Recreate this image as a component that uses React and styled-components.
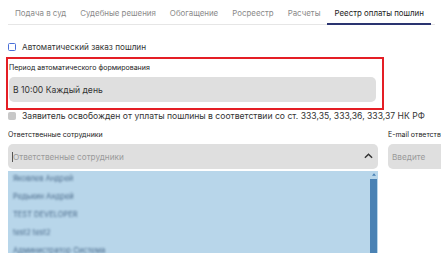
import React from 'react'
import styled, { createGlobalStyle } from 'styled-components'

const GlobalStyle = createGlobalStyle`
    html, body {
        margin: 0;
        padding: 0;
        background: #fff;
        font-family: Inter, "Noto Sans", sans-serif;
        color: #333;
        overflow: hidden;
    }
`;

const tabs = ["Подача в суд", "Судебные решения", "Обогащение", "Росреестр", "Расчеты", "Реестр оплаты пошлин"];
const people = ["Яковлев Андрей", "Редькин Андрей", "TEST DEVELOPER", "test2 test2", "Администратор Система"];

function App() {
    return (
        <>
        <GlobalStyle />
        <Page>
            <Tabs>
                {tabs.map((t, i) => (
                    <Tab key={t} active={i === tabs.length - 1}>{t}</Tab>
                ))}
            </Tabs>
            <CheckRow>
                <Box tone="blue" />
                <CheckText>Автоматический заказ пошлин</CheckText>
            </CheckRow>
            <Highlight>
                <SmallLabel>Период автоматического формирования</SmallLabel>
                <Input>В 10:00 Каждый день</Input>
            </Highlight>
            <CheckRow tight>
                <Box tone="grey" />
                <CheckText long>Заявитель освобожден от уплаты пошлины в соответствии со ст. 333,35, 333,36, 333,37 НК РФ</CheckText>
            </CheckRow>
            <Columns>
                <Column>
                    <SmallLabel>Ответственные сотрудники</SmallLabel>
                    <Input placeholder>
                        <Caret />Ответственные сотрудники
                        <Chevron viewBox="0 0 10 6">
                            <path d="M1 5 L5 1 L9 5" fill="none" stroke="#333" strokeWidth="1.6" />
                        </Chevron>
                    </Input>
                    <List>
                        <Items>
                            {people.map((p) => (
                                <Item key={p}>{p}</Item>
                            ))}
                        </Items>
                        <Scroll>
                            <ScrollArrow viewBox="0 0 6 4">
                                <path d="M0 4 L3 0 L6 4 Z" fill="#4a82b4" />
                            </ScrollArrow>
                            <Thumb />
                        </Scroll>
                    </List>
                </Column>
                <Column side>
                    <SmallLabel>E-mail ответственного</SmallLabel>
                    <Input placeholder>Введите</Input>
                </Column>
            </Columns>
        </Page>
        </>
    )
}

const Page = styled.div`
    width: 441px;
    height: 253px;
    padding: 0 0 0 8px;
    box-sizing: border-box;
    overflow: hidden;
`;
const Tabs = styled.div`
    display: flex;
    width: 427px;
    border-bottom: 1px solid #e6e6e6;
    height: 25px;
    box-sizing: border-box;
`;
const Tab = styled.div`
    padding: 8px 7px 0;
    margin-right: 0;
    font-size: 7.9px;
    color: ${(p) => (p.active ? "#222" : "#8a8a8a")};
    white-space: nowrap;
    border-bottom: 2px solid ${(p) => (p.active ? "#2a3470" : "transparent")};
    margin-bottom: -1px;
`;
const CheckRow = styled.div`
    display: flex;
    align-items: center;
    gap: 6px;
    margin-top: ${(p) => (p.tight ? "1px" : "17px")};
    height: 10px;
`;
const Box = styled.div`
    width: 6px;
    height: 6px;
    border-radius: 1.5px;
    border: 1px solid ${(p) => (p.tone === "blue" ? "#4a6fd8" : "#c8c8c8")};
    background: ${(p) => (p.tone === "blue" ? "#fff" : "#c8c8c8")};
`;
const CheckText = styled.div`
    font-size: ${(p) => (p.long ? "8.6px" : "8.2px")};
    color: #333;
    white-space: nowrap;
`;
const Highlight = styled.div`
    margin: 5px 0 0 -2px;
    width: 378px;
    height: 53px;
    box-sizing: border-box;
    border: 2px solid #e41e25;
    padding: 3px 6px 0 1px;
`;
const SmallLabel = styled.div`
    font-size: 7px;
    color: #222;
    white-space: nowrap;
    height: 11px;
    line-height: 11px;
`;
const Input = styled.div`
    position: relative;
    display: flex;
    align-items: center;
    height: 25px;
    margin-top: 4px;
    padding-left: 4px;
    border-radius: 5px;
    background: #dfdfdf;
    font-size: ${(p) => (p.placeholder ? "8.2px" : "8.6px")};
    color: ${(p) => (p.placeholder ? "#9a9a9a" : "#333")};
    white-space: nowrap;
    overflow: hidden;
`;
const Caret = styled.span`
    display: inline-block;
    width: 1px;
    height: 10px;
    background: #555;
`;
const Chevron = styled.svg`
    position: absolute;
    right: 5px;
    top: 9px;
    width: 9px;
    height: 6px;
`;
const Columns = styled.div`
    display: flex;
    gap: 10px;
    margin-top: 8px;
`;
const Column = styled.div`
    width: ${(p) => (p.side ? "80px" : "370px")};
    flex-shrink: 0;
`;
const List = styled.div`
    display: flex;
    margin-top: 2px;
    height: 90px;
    background: #b8d6ea;
`;
const Items = styled.div`
    flex: 1;
    padding: 0 0 0 5px;
`;
const Item = styled.div`
    height: 18px;
    line-height: 15px;
    font-size: 7.5px;
    color: #4a6a8a;
    filter: blur(1.1px);
    white-space: nowrap;
`;
const Scroll = styled.div`
    width: 7px;
    margin-right: 1px;
    display: flex;
    flex-direction: column;
    align-items: center;
`;
const ScrollArrow = styled.svg`
    width: 4px;
    height: 3px;
    margin: 2px 0 3px;
`;
const Thumb = styled.div`
    flex: 1;
    width: 7px;
    background: #4a82b4;
`;

export default App;
